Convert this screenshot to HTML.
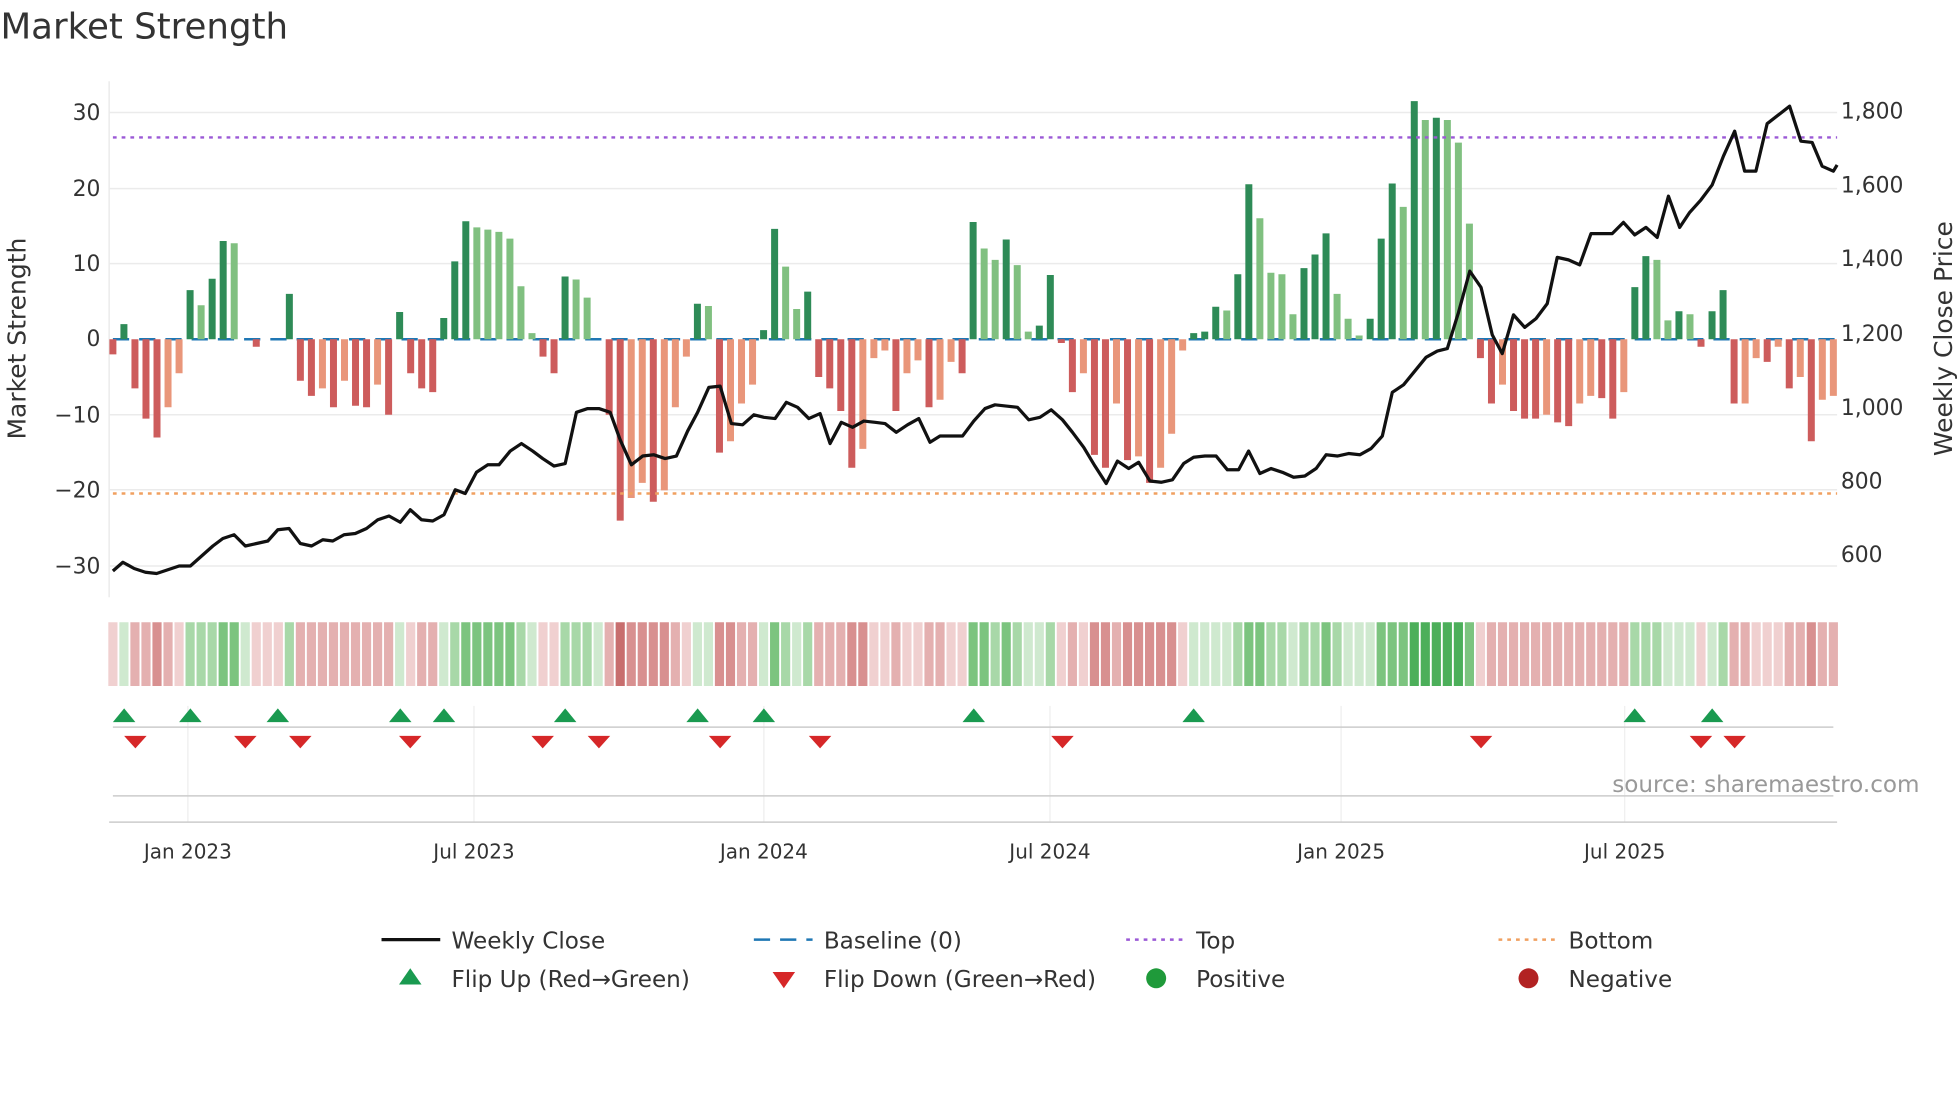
<!DOCTYPE html>
<html><head><meta charset="utf-8">
<style>
html,body{margin:0;padding:0;background:#fff;}
svg{display:block;font-family:"DejaVu Sans","Liberation Sans",sans-serif;}
</style></head>
<body>
<svg width="1960" height="1102" viewBox="0 0 1568 882" xmlns="http://www.w3.org/2000/svg">
<rect width="1568" height="882" fill="#fff"/>
<text x="0" y="31" font-size="28.5" fill="#333">Market Strength</text>
<g stroke="#ebebeb" stroke-width="1.2">
<line x1="87" x2="1470" y1="90" y2="90"/><line x1="87" x2="1470" y1="151" y2="151"/>
<line x1="87" x2="1470" y1="211" y2="211"/><line x1="87" x2="1470" y1="332" y2="332"/>
<line x1="87" x2="1470" y1="392" y2="392"/><line x1="87" x2="1470" y1="453" y2="453"/>
<line x1="87" x2="87" y1="65" y2="478"/>
</g>
<g font-size="17.5" fill="#333" text-anchor="end">
<text x="80" y="96">30</text><text x="80" y="157">20</text><text x="80" y="217">10</text>
<text x="80" y="277">0</text><text x="80" y="338">−10</text><text x="80" y="398">−20</text><text x="80" y="459">−30</text>
</g>
<g font-size="17.5" fill="#333">
<text x="1473" y="95">1,800</text><text x="1473" y="154">1,600</text><text x="1473" y="213">1,400</text>
<text x="1473" y="273">1,200</text><text x="1473" y="332">1,000</text><text x="1473" y="391">800</text><text x="1473" y="450">600</text>
</g>
<text transform="translate(20,271) rotate(-90)" font-size="20" fill="#333" text-anchor="middle">Market Strength</text>
<text transform="translate(1562,271) rotate(-90)" font-size="20" fill="#333" text-anchor="middle">Weekly Close Price</text>

<line x1="90" x2="1470" y1="271.5" y2="271.5" stroke="#1f77b4" stroke-width="2" stroke-dasharray="13,8"/>
<g transform="translate(90,271.5) scale(8.8269,-6.05)" fill="none" stroke-width="0.634">
<path stroke="#2e8b57" d="M1 0V2M7 0V6.5M9 0V8M10 0V13M16 0V6M26 0V3.6M30 0V2.8M31 0V10.3M32 0V15.6M41 0V8.3M53 0V4.7M59 0V1.2M60 0V14.6M63 0V6.3M78 0V15.5M81 0V13.2M84 0V1.8M85 0V8.5M98 0V0.8M99 0V1M100 0V4.3M102 0V8.6M103 0V20.5M108 0V9.4M109 0V11.2M110 0V14M114 0V2.7M115 0V13.3M116 0V20.6M118 0V31.5M120 0V29.3M138 0V6.9M139 0V11M142 0V3.7M145 0V3.7M146 0V6.5"/>
<path stroke="#80c080" d="M8 0V4.5M11 0V12.7M33 0V14.8M34 0V14.5M35 0V14.2M36 0V13.3M37 0V7M38 0V0.8M42 0V7.9M43 0V5.5M54 0V4.4M61 0V9.6M62 0V4M79 0V12M80 0V10.5M82 0V9.8M83 0V1M101 0V3.8M104 0V16M105 0V8.8M106 0V8.6M107 0V3.3M111 0V6M112 0V2.7M113 0V0.5M117 0V17.5M119 0V29M121 0V29M122 0V26M123 0V15.3M140 0V10.5M141 0V2.5M143 0V3.3"/>
<path stroke="#cd5c5c" d="M0 0V-2M2 0V-6.5M3 0V-10.5M4 0V-13M13 0V-1M17 0V-5.5M18 0V-7.5M20 0V-9M22 0V-8.8M23 0V-9M25 0V-10M27 0V-4.5M28 0V-6.5M29 0V-7M39 0V-2.3M40 0V-4.5M45 0V-10M46 0V-24M49 0V-21.5M55 0V-15M64 0V-5M65 0V-6.5M66 0V-9.5M67 0V-17M71 0V-9.5M74 0V-9M77 0V-4.5M86 0V-0.5M87 0V-7M89 0V-15.3M90 0V-17M92 0V-16M94 0V-19M124 0V-2.5M125 0V-8.5M127 0V-9.5M128 0V-10.5M129 0V-10.5M131 0V-11M132 0V-11.5M135 0V-7.8M136 0V-10.5M144 0V-1M147 0V-8.5M150 0V-3M152 0V-6.5M154 0V-13.5"/>
<path stroke="#e9967a" d="M5 0V-9M6 0V-4.5M19 0V-6.5M21 0V-5.5M24 0V-6M47 0V-21M48 0V-19M50 0V-20M51 0V-9M52 0V-2.3M56 0V-13.5M57 0V-8.5M58 0V-6M68 0V-14.5M69 0V-2.5M70 0V-1.5M72 0V-4.5M73 0V-2.8M75 0V-8M76 0V-3M88 0V-4.5M91 0V-8.5M93 0V-15.5M95 0V-17M96 0V-12.5M97 0V-1.5M126 0V-6M130 0V-10M133 0V-8.5M134 0V-7.5M137 0V-7M148 0V-8.5M149 0V-2.5M151 0V-1M153 0V-5M155 0V-8M156 0V-7.5"/>
</g>
<line x1="90" x2="1470" y1="110" y2="110" stroke="#9b59d6" stroke-width="2" stroke-dasharray="3,4"/>
<line x1="90" x2="1470" y1="395" y2="395" stroke="#f0a060" stroke-width="2" stroke-dasharray="3,4"/>
<polyline fill="none" stroke="#111" stroke-width="2.6" stroke-linejoin="round" points="90,457 98,450 107,455 116,458 125,459 134,456 143,453 152,453 161,445 170,437 178,431 187,428 196,437 205,435 214,433 222,424 231,423 240,435 249,437 258,432 266,433 275,428 284,427 293,423 302,416 311,413 320,418 328,408 337,416 346,417 355,412 364,392 372,395 381,378 390,372 399,372 408,361 417,355 426,361 434,367 443,373 452,371 461,330 470,327 479,327 488,330 496,352 505,372 514,365 523,364 532,367 541,365 550,345 558,330 567,310 576,309 585,339 594,340 603,332 611,334 620,335 629,322 638,326 647,335 656,331 664,355 673,338 682,342 691,337 700,338 708,339 717,346 726,340 735,335 744,354 752,349 761,349 770,349 779,337 788,327 796,324 805,325 814,326 823,336 832,334 841,328 850,336 858,346 867,358 876,373 885,387 894,369 903,375 911,370 920,385 929,386 938,384 947,371 955,366 964,365 973,365 982,376 991,376 999,361 1008,379 1017,375 1026,378 1035,382 1044,381 1053,375 1061,364 1070,365 1079,363 1088,364 1097,359 1106,349 1114,314 1123,308 1132,297 1141,286 1150,281 1158,279 1167,250 1176,217 1185,230 1194,268 1202,283 1211,252 1220,262 1229,255 1238,243 1246,206 1255,208 1264,212 1273,187 1282,187 1290,187 1299,178 1308,188 1317,182 1326,190 1335,157 1344,182 1352,170 1361,160 1370,148 1379,125 1388,105 1396,137 1405,137 1414,99 1423,92 1432,85 1441,113 1450,114 1458,133 1467,137 1470,132"/>

<g transform="translate(90,0) scale(8.8269,1)" fill="none" stroke-width="0.83">
<path stroke="#cfe9cf" d="M1 498V549M12 498V549M26 498V549M30 498V549M38 498V549M44 498V549M53 498V549M54 498V549M59 498V549M62 498V549M83 498V549M84 498V549M98 498V549M99 498V549M100 498V549M101 498V549M107 498V549M112 498V549M113 498V549M114 498V549M141 498V549M142 498V549M143 498V549M145 498V549"/>
<path stroke="#a8d8a8" d="M7 498V549M8 498V549M9 498V549M16 498V549M31 498V549M37 498V549M41 498V549M42 498V549M43 498V549M61 498V549M63 498V549M80 498V549M82 498V549M85 498V549M102 498V549M105 498V549M106 498V549M108 498V549M109 498V549M111 498V549M138 498V549M139 498V549M140 498V549M146 498V549"/>
<path stroke="#7cc47f" d="M10 498V549M11 498V549M32 498V549M33 498V549M34 498V549M35 498V549M36 498V549M60 498V549M78 498V549M79 498V549M81 498V549M103 498V549M104 498V549M110 498V549M115 498V549M116 498V549M117 498V549M123 498V549"/>
<path stroke="#4caf5a" d="M118 498V549M119 498V549M120 498V549M121 498V549M122 498V549"/>
<path stroke="#f0d0d0" d="M0 498V549M6 498V549M13 498V549M14 498V549M15 498V549M27 498V549M39 498V549M40 498V549M52 498V549M69 498V549M70 498V549M72 498V549M73 498V549M76 498V549M77 498V549M86 498V549M88 498V549M97 498V549M124 498V549M144 498V549M149 498V549M150 498V549M151 498V549"/>
<path stroke="#e4b0b0" d="M2 498V549M3 498V549M5 498V549M17 498V549M18 498V549M19 498V549M20 498V549M21 498V549M22 498V549M23 498V549M24 498V549M25 498V549M28 498V549M29 498V549M45 498V549M51 498V549M57 498V549M58 498V549M64 498V549M65 498V549M66 498V549M71 498V549M74 498V549M75 498V549M87 498V549M91 498V549M125 498V549M126 498V549M127 498V549M128 498V549M129 498V549M130 498V549M131 498V549M132 498V549M133 498V549M134 498V549M135 498V549M136 498V549M137 498V549M147 498V549M148 498V549M152 498V549M153 498V549M155 498V549M156 498V549"/>
<path stroke="#d89090" d="M4 498V549M47 498V549M48 498V549M49 498V549M50 498V549M55 498V549M56 498V549M67 498V549M68 498V549M89 498V549M90 498V549M92 498V549M93 498V549M94 498V549M95 498V549M96 498V549M154 498V549"/>
<path stroke="#c86e6e" d="M46 498V549"/>
</g>

<g stroke="#eee" stroke-width="1">
<line x1="150" x2="150" y1="565" y2="658"/><line x1="379" x2="379" y1="565" y2="658"/>
<line x1="611" x2="611" y1="565" y2="658"/><line x1="840" x2="840" y1="565" y2="658"/>
<line x1="1073" x2="1073" y1="565" y2="658"/><line x1="1300" x2="1300" y1="565" y2="658"/>
</g>
<line x1="90" x2="1467" y1="582" y2="582" stroke="#ccc" stroke-width="1.2"/>
<line x1="90" x2="1467" y1="637" y2="637" stroke="#ccc" stroke-width="1.2"/>
<line x1="87" x2="1470" y1="658" y2="658" stroke="#ccc" stroke-width="1.2"/>
<g fill="#1a9a50">
<polygon points="99,567 90,578 108,578"/><polygon points="152,567 143,578 161,578"/><polygon points="222,567 213,578 231,578"/>
<polygon points="320,567 311,578 329,578"/><polygon points="355,567 346,578 364,578"/><polygon points="452,567 443,578 461,578"/>
<polygon points="558,567 549,578 567,578"/><polygon points="611,567 602,578 620,578"/><polygon points="779,567 770,578 788,578"/>
<polygon points="955,567 946,578 964,578"/><polygon points="1308,567 1299,578 1317,578"/><polygon points="1370,567 1361,578 1379,578"/>
</g>
<g fill="#d62728">
<polygon points="99,589 117,589 108,599"/><polygon points="187,589 205,589 196,599"/><polygon points="231,589 249,589 240,599"/>
<polygon points="319,589 337,589 328,599"/><polygon points="425,589 443,589 434,599"/><polygon points="470,589 488,589 479,599"/>
<polygon points="567,589 585,589 576,599"/><polygon points="647,589 665,589 656,599"/><polygon points="841,589 859,589 850,599"/>
<polygon points="1176,589 1194,589 1185,599"/><polygon points="1352,589 1370,589 1361,599"/><polygon points="1379,589 1397,589 1388,599"/>
</g>
<text x="1536" y="634" font-size="18.5" fill="#999" text-anchor="end">source: sharemaestro.com</text>
<g font-size="16" fill="#333" text-anchor="middle">
<text x="150" y="687">Jan 2023</text><text x="379" y="687">Jul 2023</text><text x="611" y="687">Jan 2024</text>
<text x="840" y="687">Jul 2024</text><text x="1073" y="687">Jan 2025</text><text x="1300" y="687">Jul 2025</text>
</g>
<g font-size="18.5" fill="#333">
<line x1="305" x2="352" y1="752" y2="752" stroke="#111" stroke-width="2.6"/>
<text x="361" y="759">Weekly Close</text>
<line x1="603" x2="650" y1="752" y2="752" stroke="#1f77b4" stroke-width="2" stroke-dasharray="13,8"/>
<text x="659" y="759">Baseline (0)</text>
<line x1="901" x2="948" y1="752" y2="752" stroke="#9b59d6" stroke-width="2" stroke-dasharray="3,4"/>
<text x="957" y="759">Top</text>
<line x1="1199" x2="1246" y1="752" y2="752" stroke="#f0a060" stroke-width="2" stroke-dasharray="3,4"/>
<text x="1255" y="759">Bottom</text>
<polygon points="328,775 319,788 337,788" fill="#1a9a50"/>
<text x="361" y="790">Flip Up (Red→Green)</text>
<polygon points="618,778 636,778 627,791" fill="#d62728"/>
<text x="659" y="790">Flip Down (Green→Red)</text>
<circle cx="925" cy="783" r="8" fill="#1f9a3a"/>
<text x="957" y="790">Positive</text>
<circle cx="1223" cy="783" r="8" fill="#b22222"/>
<text x="1255" y="790">Negative</text>
</g>
</svg>
</body></html>
